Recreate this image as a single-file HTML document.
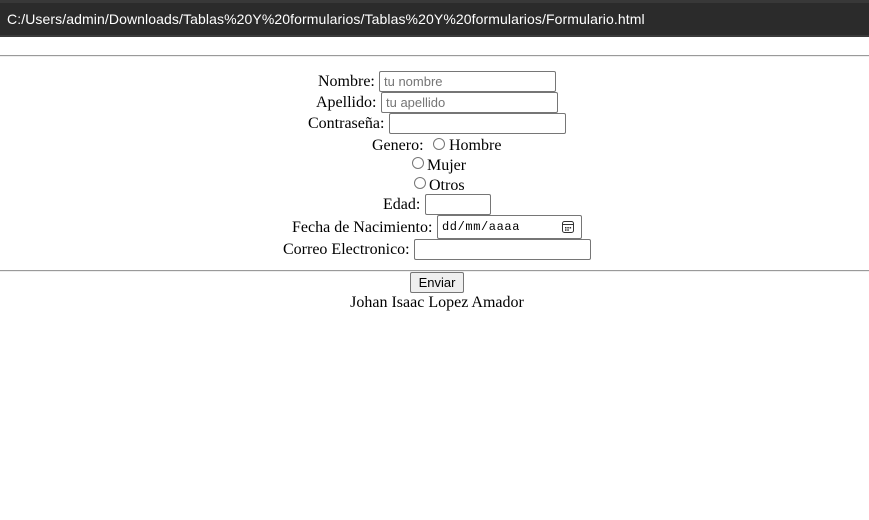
<!DOCTYPE html>
<html><head><style>
body{margin:0;width:869px;height:520px;background:#fff;position:relative;overflow:hidden;font-family:"Liberation Serif",serif;font-size:16px;color:#000}
.bar{position:absolute;left:0;top:0;width:869px;height:37px;background:#2b2b2b;border-top:3px solid #383838;box-sizing:border-box;border-bottom:2px solid #3a3a3a}
.bar span{position:absolute;left:7px;top:8px;color:#fff;font-family:"Liberation Sans",sans-serif;font-size:14px;letter-spacing:0.1px}
.a{position:absolute;white-space:nowrap;line-height:18px}
.in{position:absolute;border:1px solid #767676;border-radius:2px;box-sizing:border-box;background:#fff;font-family:"Liberation Sans",sans-serif;font-size:13px;color:#757575;padding-left:4px;line-height:19px}
.hr{position:absolute;left:0;width:869px;height:0;border-top:1px solid #9a9a9a;border-bottom:1px solid #eee}
.r{position:absolute;width:12px;height:12px;border:1px solid #767676;border-radius:50%;box-sizing:border-box}
</style></head><body>
<div class="bar"><span>C:/Users/admin/Downloads/Tablas%20Y%20formularios/Tablas%20Y%20formularios/Formulario.html</span></div>
<div class="hr" style="top:55px"></div>
<div class="a" style="left:318px;top:73px">Nombre:</div>
<div class="in" style="left:379px;top:71px;width:177px;height:21px">tu nombre</div>
<div class="a" style="left:316px;top:94px">Apellido:</div>
<div class="in" style="left:381px;top:92px;width:177px;height:21px">tu apellido</div>
<div class="a" style="left:308px;top:115px">Contraseña:</div>
<div class="in" style="left:389px;top:113px;width:177px;height:21px"></div>
<div class="a" style="left:372px;top:137px">Genero:</div>
<div class="r" style="left:433px;top:138px"></div>
<div class="a" style="left:449px;top:137px">Hombre</div>
<div class="r" style="left:412px;top:157px"></div>
<div class="a" style="left:427px;top:157px">Mujer</div>
<div class="r" style="left:414px;top:177px"></div>
<div class="a" style="left:429px;top:177px">Otros</div>
<div class="a" style="left:383px;top:196px">Edad:</div>
<div class="in" style="left:425px;top:194px;width:66px;height:21px"></div>
<div class="a" style="left:292px;top:219px">Fecha de Nacimiento:</div>
<div class="in" style="left:437px;top:215px;width:145px;height:24px;color:#000;font-family:'Liberation Mono',monospace;font-size:12px;line-height:22px;padding-left:4px;letter-spacing:0.6px">dd/mm/aaaa
<svg style="position:absolute;left:123px;top:4px" width="14" height="14" viewBox="0 0 14 14"><rect x="1.5" y="1.5" width="11" height="11" rx="2" fill="none" stroke="#333"/><line x1="1.5" y1="4.5" x2="12.5" y2="4.5" stroke="#333"/><rect x="4" y="7" width="1.5" height="1.5" fill="#333"/><rect x="6.3" y="7" width="1.5" height="1.5" fill="#333"/><rect x="8.6" y="7" width="1.5" height="1.5" fill="#333"/><rect x="4" y="9.3" width="1.5" height="1.5" fill="#333"/><rect x="6.3" y="9.3" width="1.5" height="1.5" fill="#333"/></svg></div>
<div class="a" style="left:283px;top:241px">Correo Electronico:</div>
<div class="in" style="left:414px;top:239px;width:177px;height:21px"></div>
<div class="hr" style="top:270px"></div>
<div style="position:absolute;left:410px;top:272px;width:54px;height:21px;box-sizing:border-box;border:1px solid #767676;border-radius:2px;background:#efefef;font-family:'Liberation Sans',sans-serif;font-size:13px;text-align:center;line-height:19px">Enviar</div>
<div class="a" style="left:0;width:874px;text-align:center;top:294px">Johan Isaac Lopez Amador</div>
</body></html>
